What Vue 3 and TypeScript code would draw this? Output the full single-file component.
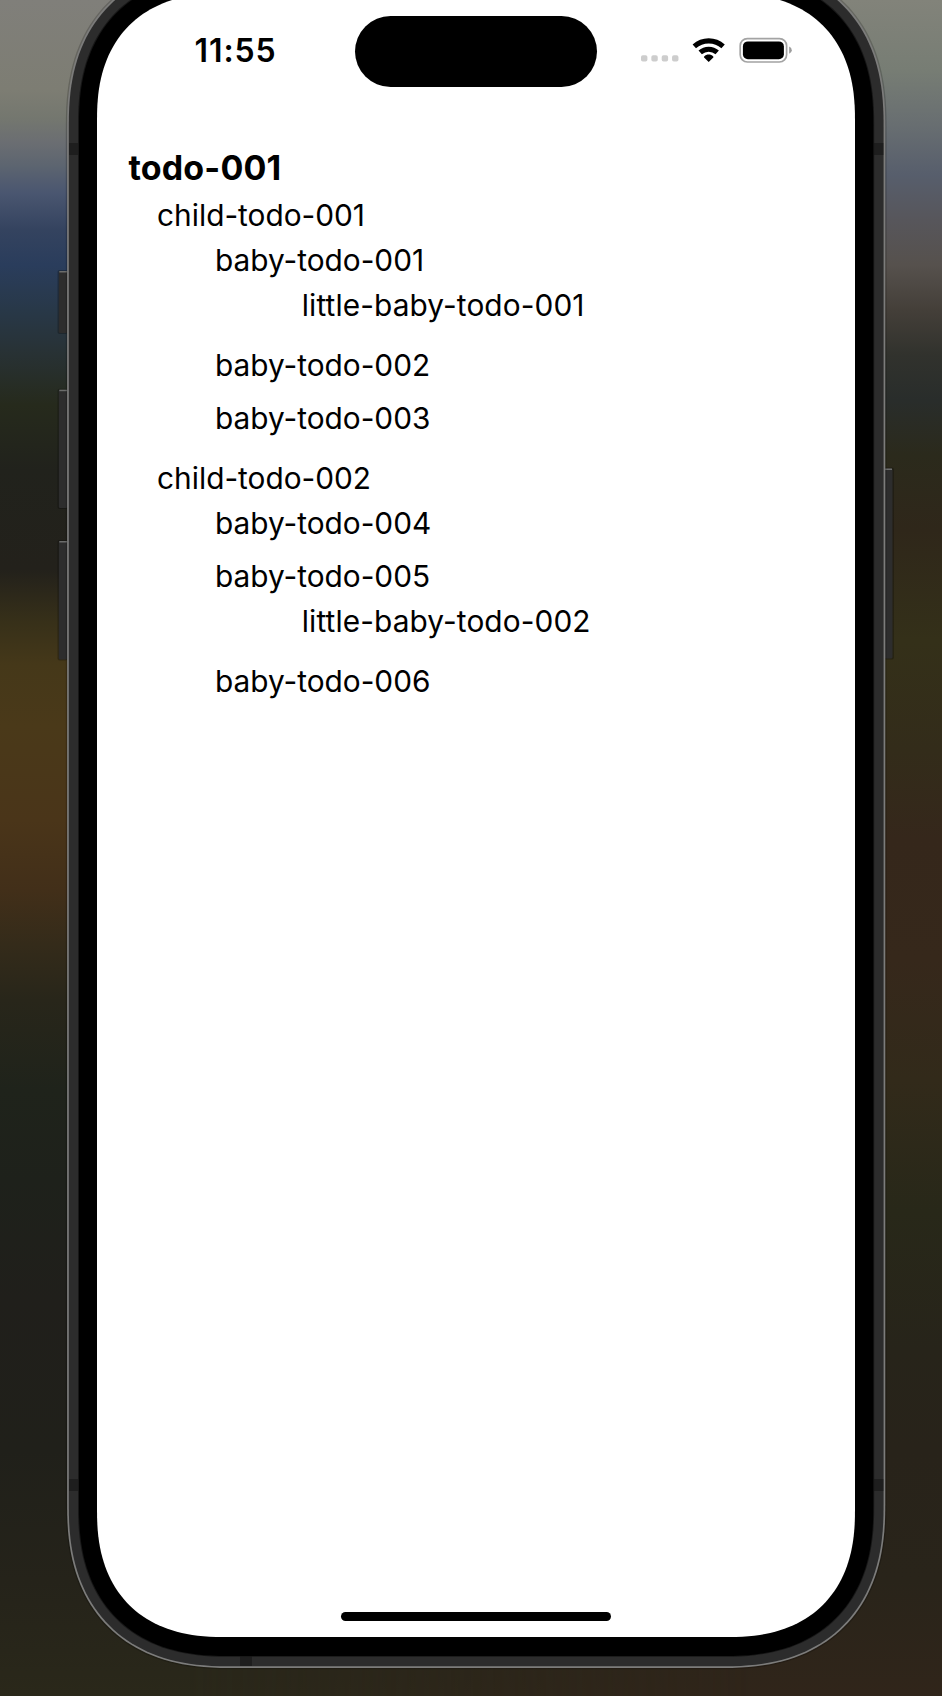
<script setup lang="ts">
interface Todo {
  title: string
  children?: Todo[]
}

interface Row {
  title: string
  level: number
  trailing: number
}

const todo: Todo = {
  title: 'todo-001',
  children: [
    {
      title: 'child-todo-001',
      children: [
        { title: 'baby-todo-001', children: [{ title: 'little-baby-todo-001' }] },
        { title: 'baby-todo-002' },
        { title: 'baby-todo-003' },
      ],
    },
    {
      title: 'child-todo-002',
      children: [
        { title: 'baby-todo-004' },
        { title: 'baby-todo-005', children: [{ title: 'little-baby-todo-002' }] },
        { title: 'baby-todo-006' },
      ],
    },
  ],
}

// Flattens the tree; `trailing` counts the groups that close after a row.
function flatten(items: Todo[], level: number): Row[] {
  const rows: Row[] = []
  for (const item of items) {
    rows.push({ title: item.title, level, trailing: 0 })
    if (item.children) rows.push(...flatten(item.children, level + 1))
    rows[rows.length - 1].trailing += 1
  }
  return rows
}

const rows = flatten(todo.children ?? [], 1)

// Rounded rectangle whose corners are superellipse quadrants.
function squircle(x: number, y: number, w: number, h: number, r: number): string {
  const steps = 40
  const exponent = 2 / 2.4
  const points: string[] = []
  const corner = (cx: number, cy: number, start: number) => {
    for (let i = 0; i <= steps; i++) {
      const a = ((start + i / steps) * Math.PI) / 2
      const c = Math.cos(a)
      const s = Math.sin(a)
      const px = cx + Math.sign(c) * Math.abs(c) ** exponent * r
      const py = cy + Math.sign(s) * Math.abs(s) ** exponent * r
      points.push(`${px.toFixed(2)} ${py.toFixed(2)}`)
    }
  }
  corner(x + w - r, y + h - r, 0)
  corner(x + r, y + h - r, 1)
  corner(x + r, y + r, 2)
  corner(x + w - r, y + r, 3)
  return `M${points.join('L')}Z`
}

const halo = squircle(65.8, -38.3, 820.8, 1707.6, 165.5)
const edge = squircle(67.1, -37, 818.2, 1705, 164.2)
const band = squircle(68.8, -35.3, 814.8, 1701.6, 162.2)
const lip = squircle(78, -26, 796.2, 1682.8, 151.5)
const bezel = squircle(79, -25, 794.3, 1681, 150.5)
const screen = squircle(97, -6.6, 758, 1643.6, 128)

const leftButtons = [
  { y: 271, h: 62 },
  { y: 389.7, h: 118.3 },
  { y: 541, h: 118.5 },
]
</script>

<template>
  <main class="desktop">
    <svg class="device" viewBox="0 0 942 1696" width="942" height="1696" aria-hidden="true">
      <g v-for="b in leftButtons" :key="b.y">
        <rect x="57.5" :y="b.y - 1" width="10" :height="b.h + 2" rx="2" fill="#000" opacity=".25" />
        <rect x="58.8" :y="b.y" width="9" :height="b.h" rx="1.5" fill="#2d2d2d" />
        <rect x="59.3" :y="b.y" width="8" height="1.5" fill="#6c6d6c" />
      </g>
      <rect x="884" y="467.5" width="10" height="192" rx="2" fill="#000" opacity=".25" />
      <rect x="884" y="468.5" width="8.5" height="190" rx="1.5" fill="#2d2d2d" />
      <rect x="884" y="468.5" width="8" height="1.5" fill="#6c6d6c" />
      <path :d="halo" fill="#000" opacity=".2" />
      <path :d="edge" fill="#7c7c7b" />
      <path :d="band" fill="#2c2c2c" />
      <g fill="#1e1e1e">
        <rect x="69" y="143" width="12" height="12" />
        <rect x="69" y="1479" width="12" height="12" />
        <rect x="872" y="143" width="11.3" height="12" />
        <rect x="872" y="1479" width="11.3" height="12" />
        <rect x="240" y="1652" width="12" height="14" />
      </g>
      <path :d="lip" fill="#171717" />
      <path :d="bezel" fill="#000" />
      <path :d="screen" fill="#fff" />
    </svg>

    <section class="screen">
      <header class="status">
        <time class="clock">11:55</time>
        <div class="island"></div>
        <div class="indicators">
          <svg class="signal" viewBox="0 0 38 7" width="38" height="7">
            <rect v-for="i in 4" :key="i" :x="(i - 1) * 10.35" y=".2" width="6.4" height="6.4" rx="1.8" fill="#cdcdcd" />
          </svg>
          <svg class="wifi" viewBox="0 0 34 26" width="34" height="26">
            <g fill="none" stroke="#000" stroke-width="5.1">
              <path d="M2.3 9.3A21.7 21.7 0 0 1 31.1 9.3" />
              <path d="M8.2 15.4A12.9 12.9 0 0 1 25.2 15.4" />
            </g>
            <path d="M16.7 25.1L12.1 20.6Q11.6 20 12.2 19.4C14.6 17 18.8 17 21.2 19.4Q21.8 20 21.3 20.6Z" />
          </svg>
          <svg class="battery" viewBox="0 0 54 26" width="54" height="26">
            <rect x="1.2" y="1.6" width="46.4" height="23.4" rx="7.2" fill="none" stroke="#a3a3a3" stroke-width="1.7" />
            <rect x="3.9" y="4.4" width="41" height="17.9" rx="5" />
            <path d="M50.2 9.6Q52.8 10.8 52.8 13.2T50.2 16.8Z" fill="#9c9c9c" />
          </svg>
        </div>
      </header>

      <article class="todos">
        <h1 class="title">{{ todo.title }}</h1>
        <ul class="list">
          <li
            v-for="row in rows"
            :key="row.title"
            :class="['row', `level-${row.level}`, `close-${row.trailing}`]"
          >
            {{ row.title }}
          </li>
        </ul>
      </article>

      <footer class="footer"><div class="home"></div></footer>
    </section>
  </main>
</template>

<style>
html,
body {
  margin: 0;
  overflow: hidden;
}
</style>

<style scoped>
.desktop {
  position: relative;
  width: 942px;
  height: 1696px;
  overflow: hidden;
  isolation: isolate;
  font-family: Inter, "Liberation Sans", sans-serif;
  color: #000;
  background: linear-gradient(
    #807f7a 0, #7d7d73 90px, #74776f 118px, #6b6e72 142px, #5d6570 165px, #4a5670 193px,
    #34435f 230px, #2a3d5c 265px, #283848 310px, #283236 350px, #262a1c 405px, #21221c 470px,
    #23211b 570px, #373019 622px, #453819 665px, #4a3919 725px, #4a3519 820px,
    #422f19 890px, #342b1a 945px, #28261a 1000px, #1f231b 1090px, #1e211b 1180px,
    #201f1b 1300px, #20201a 1450px, #25231a 1580px, #2a281a 1696px
  );
}

.desktop::before {
  content: "";
  position: absolute;
  inset: 0;
  z-index: -1;
  background: linear-gradient(
    #82837a 0, #777d74 70px, #686e71 125px, #575e6c 175px, #57565b 220px, #56514d 265px,
    #443f39 310px, #31322d 355px, #292d2b 400px, #2b2a1c 455px, #2f271a 530px,
    #343019 640px, #332c1a 750px, #35271b 840px, #36281b 960px, #322a1a 1080px,
    #282819 1210px, #27241a 1350px, #28231a 1450px, #29241a 1580px, #30251a 1696px
  );
  -webkit-mask-image: linear-gradient(90deg, transparent 20%, #000 80%);
  mask-image: linear-gradient(90deg, transparent 20%, #000 80%);
}

.device {
  position: absolute;
  inset: 0;
  z-index: -1;
}

.screen {
  display: flex;
  flex-direction: column;
  box-sizing: border-box;
  width: 758px;
  height: 1637px;
  margin-left: 97px;
}

.status {
  display: grid;
  grid-template-columns: 258.3px 241.4px 258.3px;
  height: 87px;
  padding-top: 15.6px;
  box-sizing: border-box;
}

.clock {
  padding-left: 97.6px;
  line-height: 70.8px;
  font-size: 32px;
  font-weight: 600;
  letter-spacing: 0.9px;
  white-space: nowrap;
}

.island {
  height: 71px;
  border-radius: 36px;
  background: #000;
}

.indicators {
  display: flex;
  align-items: flex-start;
  padding: 21.4px 0 0 44.3px;
}

.signal {
  margin-top: 18.5px;
}

.wifi {
  margin-left: 13.2px;
}

.battery {
  margin-left: 13px;
}

.todos {
  flex: 1;
  padding-top: 57.8px;
}

.title {
  margin: 0 0 2.8px;
  padding-left: 31.5px;
  font-size: 34px;
  line-height: 45px;
  font-weight: 700;
  letter-spacing: 0.15px;
}

.list {
  margin: 0;
  padding: 0;
  list-style: none;
}

.row {
  font-size: 29.8px;
  line-height: 45px;
  white-space: nowrap;
}

.level-1 {
  padding-left: 60.1px;
}

.level-2 {
  padding-left: 118px;
}

.level-3 {
  padding-left: 204.8px;
  letter-spacing: 0.11px;
}

.close-1 {
  margin-bottom: 7.7px;
}

.close-2 {
  margin-bottom: 15.3px;
}

.footer {
  display: flex;
  justify-content: center;
  padding-bottom: 15.6px;
}

.home {
  width: 270px;
  height: 9.6px;
  border-radius: 5px;
  background: #000;
}
</style>
